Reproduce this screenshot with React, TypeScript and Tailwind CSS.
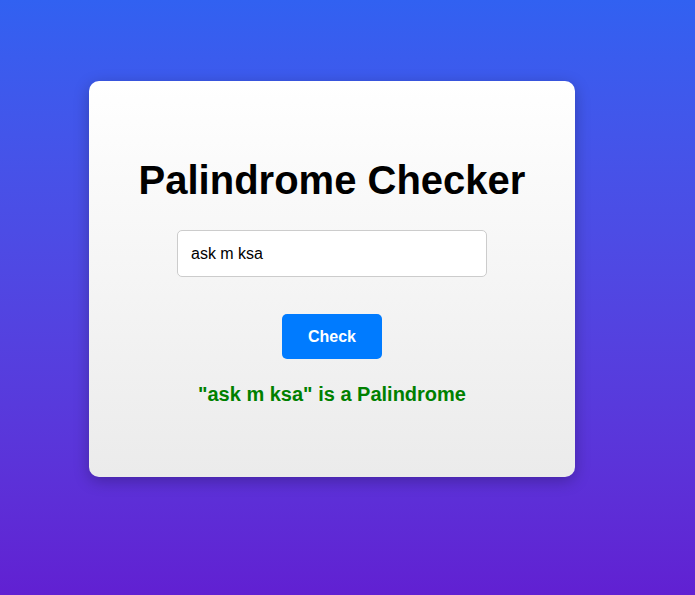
import React, { useState } from 'react';

function isPalindrome(text: string) {
    const clean = text.toLowerCase().replace(/[^a-z0-9]/g, '');
    return clean.length > 0 && clean === clean.split('').reverse().join('');
}

function App() {
    const [value, setValue] = useState('ask m ksa');
    const [result, setResult] = useState<string>(
        isPalindrome('ask m ksa') ? '"ask m ksa" is a Palindrome' : '"ask m ksa" is not a Palindrome'
    );
    const ok = isPalindrome(value);

    const check = () => {
        setResult(isPalindrome(value) ? `"${value}" is a Palindrome` : `"${value}" is not a Palindrome`);
    };

    return (
        <div
            className="h-[595px] w-full overflow-hidden bg-gradient-to-b from-[#3161f1] to-[#6120d2] pt-[81px] pl-[89px]"
            style={{ fontFamily: '"Liberation Sans", Arial, sans-serif' }}
        >
            <div className="w-[486px] rounded-[10px] bg-gradient-to-b from-white to-[#ebebeb] pt-[76px] pb-[71px] flex flex-col items-center shadow-[0_4px_15px_rgba(0,0,0,0.25)]">
                <h1 className="text-[40px] leading-[46px] font-bold text-black">Palindrome Checker</h1>

                <input
                    type="text"
                    value={value}
                    onChange={e => setValue(e.target.value)}
                    className="mt-[27px] h-[47px] w-[310px] rounded-[5px] border border-[#cccccc] bg-white pl-[13px] text-[16px] text-black outline-none"
                />

                <button
                    onClick={check}
                    className="mt-[37px] h-[45px] w-[100px] rounded-[5px] bg-[#007bff] text-[16px] font-bold text-white"
                >
                    Check
                </button>

                <p className={`mt-[24px] text-[20px] leading-[23px] font-bold ${ok ? 'text-[#008000]' : 'text-[#ff0000]'}`}>
                    {result}
                </p>
            </div>
        </div>
    );
}

export default App;
